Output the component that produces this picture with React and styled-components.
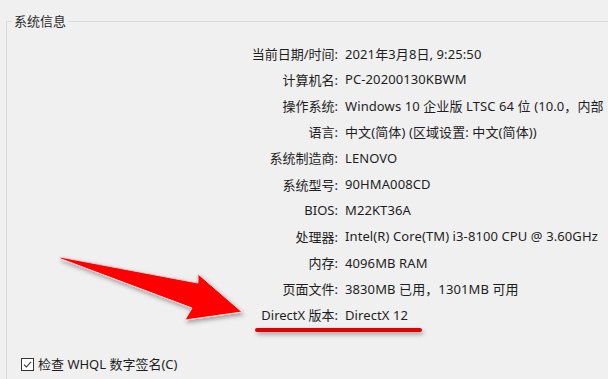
import React from 'react';
import styled, { createGlobalStyle } from 'styled-components';

const GlobalStyle = createGlobalStyle`
  html, body {
    margin: 0;
    padding: 0;
    background: #f0f0f0;
    overflow: hidden;
  }
  body {
    font-family: "Noto Sans", "Noto Sans CJK SC", sans-serif;
    font-size: 13px;
    color: #1e1e1e;
  }
`;

const Page = styled.div`
  position: relative;
  width: 608px;
  height: 379px;
  overflow: hidden;
  padding: 13px 0 0 6px;
  box-sizing: border-box;
`;

const Group = styled.fieldset`
  margin: 0;
  padding: 11px 0 0 0;
  width: 700px;
  height: 420px;
  box-sizing: border-box;
  border: 1px solid #dadada;
  min-width: 0;
`;

const Legend = styled.legend`
  margin-left: 5px;
  padding: 0 2px;
  line-height: 16px;
  color: #2a2a2a;
`;

const InfoGrid = styled.div`
  display: grid;
  grid-template-columns: 331px auto;
  grid-auto-rows: 26.2px;
  column-gap: 7px;
  align-items: center;
`;

const Label = styled.div`
  text-align: right;
  white-space: nowrap;
`;

const Value = styled.div`
  white-space: nowrap;
  letter-spacing: 0.1px;
`;

const CheckRow = styled.label`
  display: flex;
  align-items: center;
  gap: 4px;
  margin: 28px 0 0 14px;
  line-height: 16px;
`;

const Box = styled.span`
  width: 11px;
  height: 11px;
  border: 1px solid #333;
  background: #fff;
  display: inline-flex;
  align-items: center;
  justify-content: center;
`;

const Overlay = styled.svg`
  position: absolute;
  left: 0;
  top: 0;
  pointer-events: none;
`;

const rows = [
  ['当前日期/时间:', '2021年3月8日, 9:25:50'],
  ['计算机名:', 'PC-20200130KBWM'],
  ['操作系统:', 'Windows 10 企业版 LTSC 64 位 (10.0，内部'],
  ['语言:', '中文(简体) (区域设置: 中文(简体))'],
  ['系统制造商:', 'LENOVO'],
  ['系统型号:', '90HMA008CD'],
  ['BIOS:', 'M22KT36A'],
  ['处理器:', 'Intel(R) Core(TM) i3-8100 CPU @ 3.60GHz'],
  ['内存:', '4096MB RAM'],
  ['页面文件:', '3830MB 已用，1301MB 可用'],
  ['DirectX 版本:', 'DirectX 12'],
];

export default function App() {
  return (
    <>
      <GlobalStyle />
      <Page>
        <Group>
          <Legend>系统信息</Legend>
          <InfoGrid>
            {rows.map(([k, v]) => (
              <React.Fragment key={k}>
                <Label>{k}</Label>
                <Value>{v}</Value>
              </React.Fragment>
            ))}
          </InfoGrid>
          <CheckRow>
            <Box>
              <svg width="9" height="9" viewBox="0 0 9 9">
                <path d="M1 4.6 L3.4 7 L8 1.8" fill="none" stroke="#333" strokeWidth="1.1" />
              </svg>
            </Box>
            检查 WHQL 数字签名(C)
          </CheckRow>
        </Group>
        <Overlay width="608" height="379" viewBox="0 0 608 379">
          <defs>
            <filter id="sh" filterUnits="userSpaceOnUse" x="0" y="0" width="608" height="379">
              <feDropShadow dx="1.5" dy="2.5" stdDeviation="2" floodColor="#000" floodOpacity="0.35" />
            </filter>
          </defs>
          <polygon
            points="60,257 198,283 198,274 242,312 185,320 192,308 60,258.5"
            fill="#ff0000"
            stroke="#ffd8d8"
            strokeWidth="1"
            filter="url(#sh)"
          />
          <rect x="255" y="328" width="167" height="4" rx="2" fill="#e00000" filter="url(#sh)" />
        </Overlay>
      </Page>
    </>
  );
}
